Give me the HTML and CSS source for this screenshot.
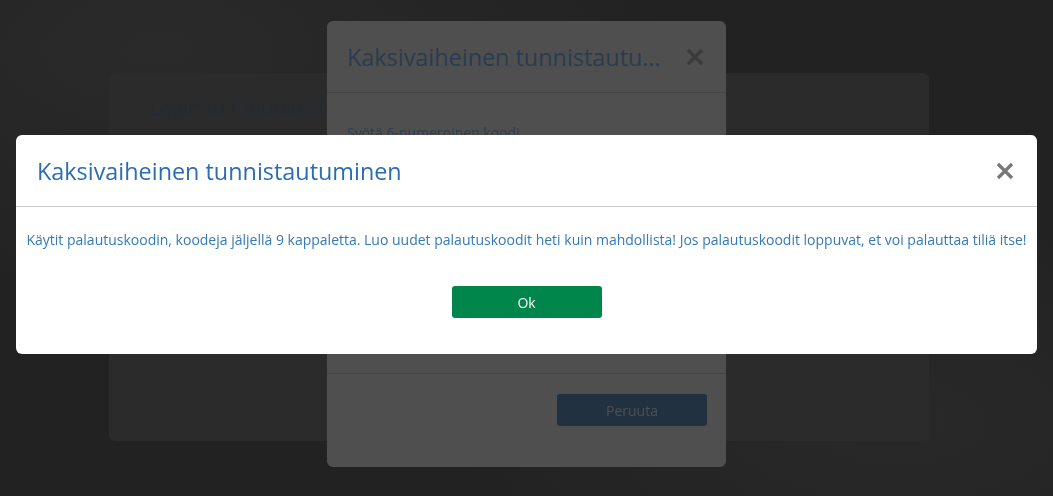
FILE: index.html
```html
<!DOCTYPE html>
<html lang="fi">
<head>
    <meta charset="UTF-8">
    <title>Cloudia</title>
    <link rel="stylesheet" href="styles.css">
</head>
<body>
    <div class="backdrop">
        <!-- Login card behind everything -->
        <div class="login-card">
            <h2 class="login-title">Login to Cloudia Service</h2>
        </div>
    </div>

    <!-- Code entry modal (dimmed) -->
    <div class="modal modal-code">
        <div class="modal-header">
            <h3 class="modal-title">Kaksivaiheinen tunnistautuminen</h3>
            <svg class="close" width="18" height="18" viewBox="0 0 18 18">
                <path d="M2 2 L16 16 M16 2 L2 16" stroke="#3b3b3b" stroke-width="3.2"/>
            </svg>
        </div>
        <div class="modal-body">
            <p class="code-label">Syötä 6-numeroinen koodi</p>
        </div>
        <div class="modal-footer">
            <button class="btn btn-cancel">Peruuta</button>
        </div>
    </div>

    <!-- Info modal on top -->
    <div class="modal modal-info">
        <div class="modal-header">
            <h3 class="modal-title">Kaksivaiheinen tunnistautuminen</h3>
            <svg class="close" width="18" height="18" viewBox="0 0 18 18">
                <path d="M2 2 L16 16 M16 2 L2 16" stroke="#777" stroke-width="3.2"/>
            </svg>
        </div>
        <div class="modal-body">
            <p class="info-text">Käytit palautuskoodin, koodeja jäljellä 9 kappaletta. Luo uudet palautuskoodit heti kuin mahdollista! Jos palautuskoodit loppuvat, et voi palauttaa tiliä itse!</p>
            <button class="btn btn-ok">Ok</button>
        </div>
    </div>
</body>
</html>
```

FILE: styles.css
```css
* {
    box-sizing: border-box;
    margin: 0;
    padding: 0;
    font-family: 'Open Sans', sans-serif;
}

body {
    background-color: #232323;
    height: 100vh;
    overflow: hidden;
}

.backdrop {
    height: 100%;
    padding-top: 73px;
    padding-left: 109px;
    background:
        radial-gradient(ellipse at 15% 10%, #2a2a2a 0%, rgba(35,35,35,0) 40%),
        radial-gradient(ellipse at 85% 85%, #292929 0%, rgba(35,35,35,0) 35%),
        #222;
}

.login-card {
    width: 820px;
    height: 368px;
    background-color: #2b2b2b;
    border-radius: 6px;
    padding: 20px 40px;
}

.login-title {
    font-size: 21px;
    font-weight: 300;
    color: #222b35;
}

.modal {
    position: fixed;
    border-radius: 6px;
    display: flex;
    flex-direction: column;
}

.modal-header {
    height: 72px;
    display: flex;
    align-items: center;
    justify-content: space-between;
    border-bottom: 1px solid;
}

.modal-title {
    font-size: 23.4px;
    font-weight: 400;
    white-space: nowrap;
    overflow: hidden;
    text-overflow: ellipsis;
}

.close {
    flex-shrink: 0;
}

.btn {
    width: 150px;
    height: 32px;
    border: none;
    border-radius: 3px;
    font-size: 14px;
    font-family: 'Open Sans', sans-serif;
}

/* dimmed modal */
.modal-code {
    left: 327px;
    top: 21px;
    width: 399px;
    height: 446px;
    background-color: #4f4f4f;
}

.modal-code .modal-header {
    padding: 0 22px 0 20px;
    border-bottom-color: #444;
}

.modal-code .modal-title {
    color: #2a3c50;
    max-width: 318px;
}

.modal-code .modal-body {
    height: 281px;
    padding: 30px 20px;
    border-bottom: 1px solid #454545;
}

.code-label {
    font-size: 14px;
    color: #2b3e52;
}

.modal-code .modal-footer {
    display: flex;
    justify-content: flex-end;
    padding: 20px 19px;
}

.btn-cancel {
    background-color: #22313f;
    color: #4b5056;
}

/* info modal */
.modal-info {
    left: 16px;
    top: 135px;
    width: 1021px;
    height: 219px;
    background-color: #fff;
}

.modal-info .modal-header {
    padding: 0 23px 0 21px;
    border-bottom-color: #cccccc;
}

.modal-info .modal-title {
    color: #2b6cb4;
}

.modal-info .modal-body {
    display: flex;
    flex-direction: column;
    align-items: center;
    padding-top: 23px;
}

.info-text {
    font-size: 14px;
    color: #337ab7;
    text-align: center;
    white-space: nowrap;
    margin-bottom: 37px;
}

.btn-ok {
    background-color: #00854a;
    color: #fff;
}
```
